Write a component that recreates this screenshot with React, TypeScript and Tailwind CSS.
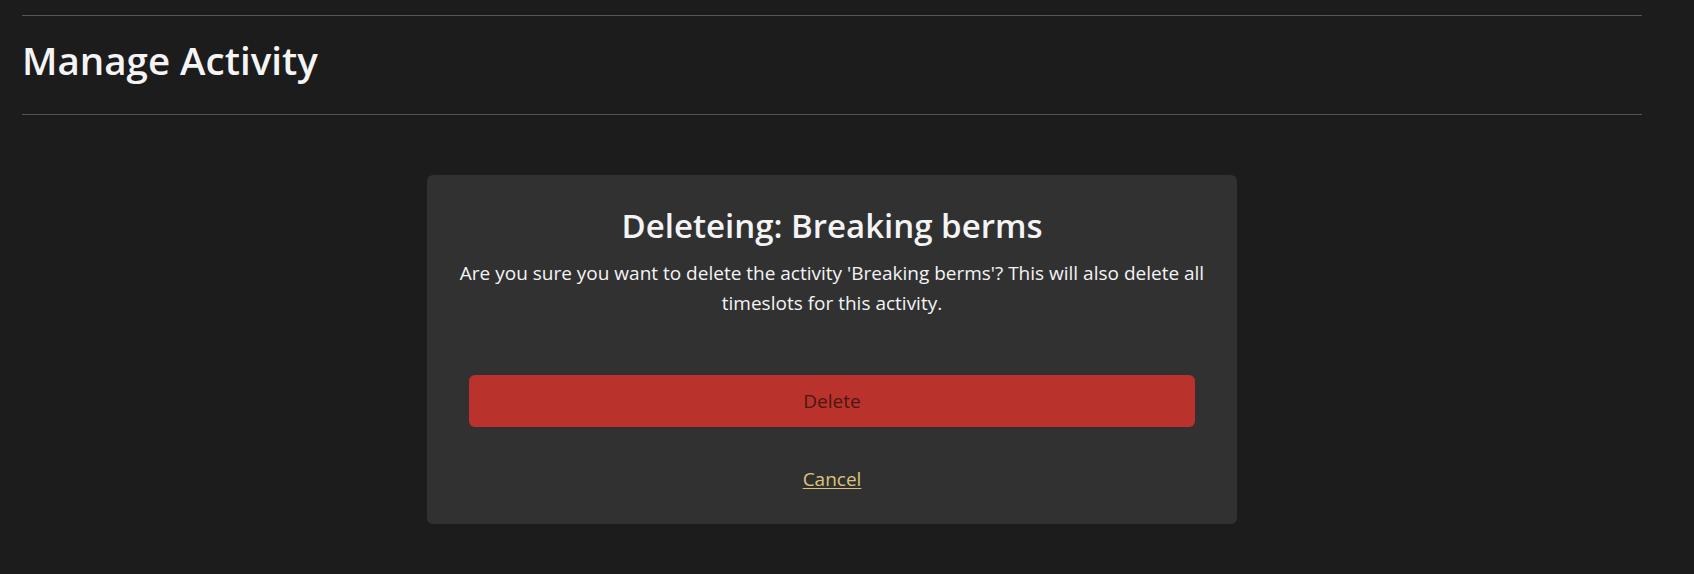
import React from "react";

export default function App() {
  return (
    <div className="min-h-[574px] bg-[#1c1c1c] font-['Open_Sans',sans-serif] text-[#f4f4f5]">
      <div className="ml-[22px] w-[1620px] pt-[15px]">
        <div className="border-t border-[#555555]" />
        <h1 className="mt-[21px] text-[38.5px] font-semibold leading-[1.2]">Manage Activity</h1>
        <div className="mt-[31px] border-t border-[#555555]" />
        <div className="mx-auto mt-[60px] w-[810px] rounded-[6px] bg-[#313131] px-[42px] pt-[31px] pb-[29px] text-center">
          <h2 className="text-[33px] font-semibold leading-[1.2]">Deleteing: Breaking berms</h2>
          <p className="-mx-[30px] mt-[12px] text-[19px] leading-[30px]">
            Are you sure you want to delete the activity 'Breaking berms'? This will also delete all
            <br />
            timeslots for this activity.
          </p>
          <button className="mt-[57px] flex h-[52px] w-full items-center justify-center rounded-[6px] bg-[#b9322b] text-[19px] text-[#4a1713]">
            Delete
          </button>
          <div className="mt-[37px] leading-[30px]">
            <a href="#" className="text-[19px] text-[#d9c47c] underline underline-offset-2">
              Cancel
            </a>
          </div>
        </div>
      </div>
    </div>
  );
}
